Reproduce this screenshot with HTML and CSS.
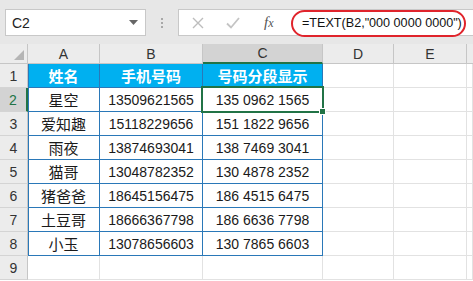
FILE: index.html
```html
<!DOCTYPE html>
<html lang="zh-CN">
<head>
  <meta charset="UTF-8">
  <title>号码分段显示</title>
  <link rel="stylesheet" href="styles.css">
</head>
<body>
  <div class="topbar">
    <div class="namebox">
      <span>C2</span>
      <svg class="caret" width="9" height="5" viewBox="0 0 9 5"><path d="M0 0h9L4.5 5z" fill="#666"/></svg>
    </div>
    <div class="dots"><i></i><i></i><i></i></div>
    <div class="fbuttons">
      <svg width="12" height="12" viewBox="0 0 12 12"><path d="M1 1l10 10M11 1L1 11" stroke="#bdbdbd" stroke-width="1.4" fill="none"/></svg>
      <svg width="14" height="12" viewBox="0 0 14 12"><path d="M1 6.5l4 4L13 1" stroke="#c4c4c4" stroke-width="1.8" fill="none"/></svg>
      <span class="fx"><i>f</i><i class="x">x</i></span>
    </div>
    <div class="formula">
      <span>=TEXT(B2,"000 0000 0000")</span>
      <div class="circle"></div>
    </div>
  </div>

  <div class="sheet">
    <div class="corner"><span class="tri"></span></div>
    <div class="colhead">A</div>
    <div class="colhead">B</div>
    <div class="colhead active">C</div>
    <div class="colhead">D</div>
    <div class="colhead">E</div>
    <div class="colhead last"></div>

    <div class="rowhead">1</div>
    <div class="cell th first">姓名</div>
    <div class="cell th">手机号码</div>
    <div class="cell th">号码分段显示</div>
    <div class="cell"></div><div class="cell"></div><div class="cell"></div>

    <div class="rowhead active">2</div>
    <div class="cell td first cjk">星空</div>
    <div class="cell td">13509621565</div>
    <div class="cell td selected">135 0962 1565<span class="handle"></span></div>
    <div class="cell"></div><div class="cell"></div><div class="cell"></div>

    <div class="rowhead">3</div>
    <div class="cell td first cjk">爱知趣</div>
    <div class="cell td">15118229656</div>
    <div class="cell td">151 1822 9656</div>
    <div class="cell"></div><div class="cell"></div><div class="cell"></div>

    <div class="rowhead">4</div>
    <div class="cell td first cjk">雨夜</div>
    <div class="cell td">13874693041</div>
    <div class="cell td">138 7469 3041</div>
    <div class="cell"></div><div class="cell"></div><div class="cell"></div>

    <div class="rowhead">5</div>
    <div class="cell td first cjk">猫哥</div>
    <div class="cell td">13048782352</div>
    <div class="cell td">130 4878 2352</div>
    <div class="cell"></div><div class="cell"></div><div class="cell"></div>

    <div class="rowhead">6</div>
    <div class="cell td first cjk">猪爸爸</div>
    <div class="cell td">18645156475</div>
    <div class="cell td">186 4515 6475</div>
    <div class="cell"></div><div class="cell"></div><div class="cell"></div>

    <div class="rowhead">7</div>
    <div class="cell td first cjk">土豆哥</div>
    <div class="cell td">18666367798</div>
    <div class="cell td">186 6636 7798</div>
    <div class="cell"></div><div class="cell"></div><div class="cell"></div>

    <div class="rowhead">8</div>
    <div class="cell td first cjk">小玉</div>
    <div class="cell td">13078656603</div>
    <div class="cell td">130 7865 6603</div>
    <div class="cell"></div><div class="cell"></div><div class="cell"></div>

    <div class="rowhead">9</div>
    <div class="cell"></div><div class="cell"></div><div class="cell"></div>
    <div class="cell"></div><div class="cell"></div><div class="cell"></div>
  </div>
</body>
</html>
```

FILE: styles.css
```css
body {
  margin: 0;
  width: 473px;
  height: 281px;
  overflow: hidden;
  background: #fff;
  font-family: "Liberation Sans", "Noto Sans CJK SC", sans-serif;
  color: #222;
}
.topbar {
  height: 44px;
  background: #e7e7e7;
  display: flex;
  align-items: flex-start;
  padding: 9px 0 0 5px;
  box-sizing: border-box;
}
.namebox {
  width: 141px;
  height: 27px;
  box-sizing: border-box;
  background: #fff;
  border: 1px solid #c8c8c8;
  display: flex;
  align-items: center;
  justify-content: space-between;
  padding: 0 7px 0 6px;
  font-size: 14px;
}
.dots {
  width: 32px;
  height: 27px;
  display: flex;
  flex-direction: column;
  align-items: center;
  justify-content: center;
  gap: 2px;
}
.dots i {
  width: 2px;
  height: 2px;
  background: #a8a8a8;
}
.fbuttons {
  width: 109px;
  height: 27px;
  box-sizing: border-box;
  background: #fff;
  border: 1px solid #c8c8c8;
  border-right: none;
  display: flex;
  align-items: center;
  gap: 22px;
  padding-left: 13px;
}
.fx {
  font-family: "Liberation Serif", serif;
  font-size: 15px;
  color: #555;
  margin-left: 2px;
}
.fx .x {
  font-size: 12px;
}
.formula {
  position: relative;
  flex: 1;
  height: 27px;
  box-sizing: border-box;
  background: #fff;
  border-top: 1px solid #c8c8c8;
  border-bottom: 1px solid #c8c8c8;
  font-size: 12.6px;
  color: #111;
  display: flex;
  align-items: center;
  padding-left: 15px;
}
.circle {
  position: absolute;
  left: 4px;
  top: 0;
  width: 175px;
  height: 27px;
  box-sizing: border-box;
  border: 2px solid #e0242c;
  border-radius: 14px;
}
.sheet {
  display: grid;
  grid-template-columns: 28px 72px 103px 120px 71px 73px 6px;
  grid-template-rows: 20px repeat(9, 24px);
}
.corner {
  background: #ececec;
  border-right: 1px solid #c6c6c6;
  border-bottom: 1px solid #c6c6c6;
  position: relative;
}
.tri {
  position: absolute;
  right: 3px;
  bottom: 3px;
  width: 0;
  height: 0;
  border-left: 10px solid transparent;
  border-bottom: 10px solid #b5b5b5;
}
.colhead {
  background: #ececec;
  border-right: 1px solid #c6c6c6;
  border-bottom: 1px solid #c6c6c6;
  font-size: 14px;
  color: #333;
  display: flex;
  align-items: center;
  justify-content: center;
}
.colhead.active {
  background: #d3d3d3;
  border-bottom: 2px solid #217346;
}
.colhead.last {
  border-right: none;
}
.rowhead {
  background: #ececec;
  border-right: 1px solid #c6c6c6;
  border-bottom: 1px solid #d4d4d4;
  font-size: 14px;
  color: #333;
  display: flex;
  align-items: flex-end;
  justify-content: center;
  padding-bottom: 3px;
  box-sizing: border-box;
}
.rowhead.active {
  background: #d3d3d3;
  color: #217346;
  border-right: 2px solid #217346;
}
.cell {
  border-right: 1px solid #e2e2e2;
  border-bottom: 1px solid #e2e2e2;
  display: flex;
  align-items: center;
  justify-content: center;
  font-size: 14px;
  white-space: nowrap;
}
.cell.th {
  background: #00b0f0;
  color: #fff;
  font-weight: bold;
  font-size: 15px;
  border-color: #2a78b8;
}
.cell.td {
  border-color: #2a78b8;
  color: #1a1a1a;
}
.cell.first {
  box-shadow: inset 1px 0 #2a78b8;
}
.cjk {
  font-size: 15px;
}
.selected {
  position: relative;
}
.selected::after {
  content: "";
  position: absolute;
  left: -2px;
  top: -2px;
  right: -2px;
  bottom: -2px;
  border: 2px solid #217346;
}
.handle {
  position: absolute;
  right: -4px;
  bottom: -4px;
  width: 5px;
  height: 5px;
  background: #217346;
  border: 1px solid #fff;
  z-index: 1;
}
```
